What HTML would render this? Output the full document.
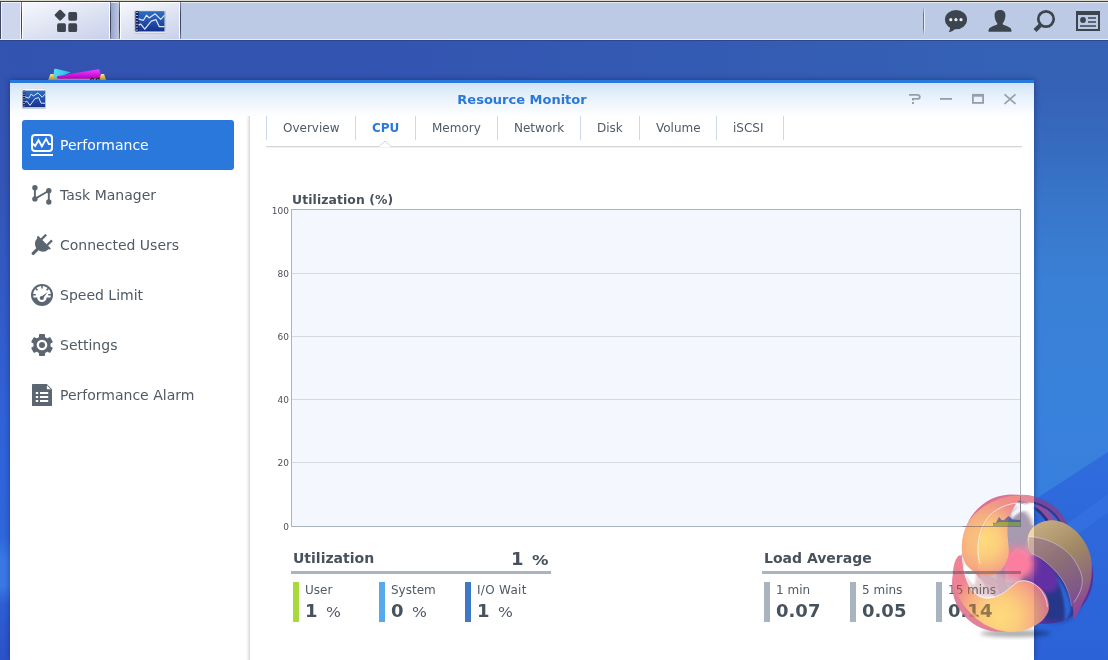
<!DOCTYPE html>
<html lang="en">
<head>
<meta charset="utf-8">
<title>Resource Monitor</title>
<style>
*{box-sizing:border-box;margin:0;padding:0}
html,body{width:1108px;height:660px;overflow:hidden}
body{position:relative;font-family:"DejaVu Sans","Liberation Sans",sans-serif;color:#505a64;
 background:#3356b2;}
.abs{position:absolute}
#desk{left:0;top:0;width:1108px;height:660px;
 background:
  linear-gradient(180deg,rgba(52,84,176,0) 0px,rgba(52,84,176,0) 660px),
  linear-gradient(90deg,#3353b0 0px,#3355b1 400px,#3563b6 1108px);}
#deskL{left:0;top:41px;width:10px;height:619px;background:linear-gradient(180deg,#3353b0 0%,#3455b6 22%,#335bc6 42%,#3062d8 61%,#2f66dc 80%,#3a78e4 84%,#3a78e4 88%,#2e5ed4 91%,#2c52c8 100%)}
#deskR{left:1034px;top:41px;width:74px;height:619px;background:linear-gradient(180deg,#3561b5 0px,#3562b6 50px,#366cc0 110px,#3876c9 160px,#3980d6 240px,#3982da 330px,#3880dc 420px,#367cdc 619px)}
/* taskbar */
#tb{left:0;top:0;width:1108px;height:41px;background:#bccae6}
#tb .l0{left:0;top:0;width:1108px;height:1px;background:#d9d9d0}
#tb .l1{left:0;top:1px;width:1108px;height:1px;background:#2a4184}
#tb .l2{left:0;top:2px;width:1108px;height:1px;background:#e4eaf6}
#tb .l3{left:0;top:39px;width:1108px;height:1px;background:#e6ecf8}
#tb .l4{left:0;top:40px;width:1108px;height:1px;background:#2c4690}
/* window */
#win{will-change:transform;left:10px;top:80px;width:1024px;height:580px;background:#fff;box-shadow:0 0 6px rgba(10,20,70,.45)}
#wtop{left:0;top:0;width:1024px;height:3px;background:#2a7ade}
#whead{left:0;top:3px;width:1024px;height:34px;background:linear-gradient(180deg,#d2e4f7 0%,#e2eefa 30%,#f0f6fd 62%,#fafcff 88%,#fff 100%)}
#title{left:0;top:12px;width:1024px;text-align:center;font-weight:bold;font-size:13px;line-height:16px;color:#2a78d8}
.nav{left:12px;width:212px;height:50px;border-radius:3px;font-size:14px;line-height:50px;padding-left:38px;color:#505a64;white-space:nowrap}
.nav.sel{background:#2a78dc;color:#fff}
.tab{top:38px;height:20px;font-size:12px;line-height:20px;white-space:nowrap;color:#505a64}
.tsep{top:36px;width:1px;height:24px;background:#cfd8ea}
.ylab{font-family:"DejaVu Sans","Liberation Sans",sans-serif;font-size:9px;line-height:10px;width:20px;text-align:right;color:#4c5058;left:259px}
.grid{left:282px;width:728px;height:1px;background:#d6d8dc}
.h14{font-weight:bold;font-size:14px;line-height:18px;color:#48525c;white-space:nowrap}
.rule{height:3px;background:#a9b4c0}
.bar{top:502px;width:6px;height:40px}
.lab{top:503px;font-size:12px;line-height:14px;color:#505a64;white-space:nowrap}
.val{top:520px;font-size:18px;line-height:22px;font-weight:bold;color:#48525c;white-space:nowrap}
.pct{display:inline-block;font-size:13.500px;font-weight:normal;color:#505a64;margin-left:8px;transform:scaleX(1.16);transform-origin:0 50%}
.vdark{top:2px;width:1px;height:38px;background:linear-gradient(180deg,#7882a4 0%,#3c4660 30%,#3c4660 70%,#7882a4 100%)}
.tbtn{top:2px;height:38px;border:1px solid #fff;background:linear-gradient(160deg,#f6f8fd 0%,#e6eaf6 35%,#d6dcf0 70%,#c8d0ea 100%)}
</style>
</head>
<body>
<div id="desk" class="abs"></div>
<div id="deskL" class="abs"></div>
<div id="deskR" class="abs"></div>

<svg class="abs" style="left:1034px;top:440px" width="74" height="220" viewBox="1034 440 74 220">
 <defs><linearGradient id="dr1" x1="0" y1="0" x2="0" y2="1"><stop offset="0" stop-color="#2f6cdc"/><stop offset="1" stop-color="#2b62d8"/></linearGradient></defs>
 <path d="M1034 500L1108 452V660H1034Z" fill="url(#dr1)"/>
 <path d="M1034 548L1108 494V512L1034 566Z" fill="#3a78e2" opacity=".45"/>
</svg>
<!-- desktop icon peeking above the window -->
<svg class="abs" style="left:44px;top:64px" width="66" height="18" viewBox="44 64 66 18">
 <defs>
  <linearGradient id="dg1" x1="0" y1="0" x2="0" y2="1"><stop offset="0" stop-color="#fbe88a"/><stop offset="1" stop-color="#e2a41c"/></linearGradient>
  <linearGradient id="dg2" x1="0" y1="0" x2="1" y2="0"><stop offset="0" stop-color="#58e0f8"/><stop offset="1" stop-color="#28b4e4"/></linearGradient>
  <linearGradient id="dg3" x1="0" y1="0" x2="0" y2="1"><stop offset="0" stop-color="#f040fc"/><stop offset="1" stop-color="#c000d8"/></linearGradient>
 </defs>
 <path d="M48 80.500l2.400-6.500h3.200l.4 1.500h46.500l.4-1.500h3.200l2.100 6.500z" fill="url(#dg1)"/>
 <path d="M54.200 69.300q.5-.8 1.600-.6l15 3.500l-14.300 6.300l-3.300-.6z" fill="url(#dg2)"/>
 <path d="M57 76.300l41-7.100q1.200-.2 1.600 .9l1 3.400l-.6 5.300h-42.600z" fill="url(#dg3)"/>
 <path d="M90.500 80q1.500-3 3.400-.5M96 80q1.600-3 3.600-.5" stroke="#3a2808" stroke-width="1.300" fill="none"/>
</svg>
<!-- taskbar -->
<div id="tb" class="abs">
 <div class="abs l0"></div><div class="abs l1"></div><div class="abs l2"></div>
 <!-- left stub -->
 <div class="abs" style="left:0;top:2px;width:1px;height:38px;background:#3e4864"></div>
 <div class="abs" style="left:1px;top:2px;width:20px;height:38px;background:#cdd6ec;border:1px solid #eef2fb"></div>
 <div class="abs vdark" style="left:21px"></div>
 <!-- main menu button -->
 <div class="abs tbtn" style="left:22px;width:88px"></div>
 <div class="abs vdark" style="left:110px"></div>
 <div class="abs" style="left:111px;top:3px;width:8px;height:36px;background:linear-gradient(90deg,#98a4c6 0%,#aab6d8 45%,#bcc8e6 100%)"></div>
 <div class="abs vdark" style="left:119px"></div>
 <!-- app button -->
 <div class="abs tbtn" style="left:120px;width:60px"></div>
 <div class="abs vdark" style="left:180px"></div>
 <!-- right divider -->
 <div class="abs" style="left:923px;top:7px;width:1px;height:28px;background:linear-gradient(180deg,rgba(80,88,110,0),#6c7490 25%,#6c7490 75%,rgba(80,88,110,0))"></div>
 <div class="abs" style="left:924px;top:7px;width:1px;height:28px;background:linear-gradient(180deg,rgba(255,255,255,0),#e8eefa 25%,#e8eefa 75%,rgba(255,255,255,0))"></div>

 <!-- main menu icon -->
 <svg class="abs" style="left:50px;top:6px" width="32" height="30" viewBox="50 6 32 30">
  <g fill="#3c444e">
   <rect x="55.9" y="11" width="8.4" height="8.4" rx="1.2" transform="rotate(45 60.1 15.2)"/>
   <rect x="68.3" y="12.1" width="8.8" height="8.6" rx="1.6"/>
   <rect x="57.1" y="23.3" width="8.8" height="8.7" rx="1.6"/>
   <rect x="68.3" y="23.3" width="8.8" height="8.7" rx="1.6"/>
  </g>
 </svg>
 <svg class="abs" style="left:134px;top:10px" width="32" height="24" viewBox="0 0 32 24">
  <defs><linearGradient id="mgA" x1="0" y1="0" x2="0" y2="1"><stop offset="0" stop-color="#2d6cc4"/><stop offset=".5" stop-color="#2252ac"/><stop offset="1" stop-color="#14308c"/></linearGradient></defs>
  <rect x="0" y="0" width="32" height="24" rx=".8" fill="#c4cad4"/>
  <rect x=".4" y=".5" width="31.2" height="0.9" fill="#fbfcfe"/>
  <rect x=".4" y="21.4" width="31.2" height="1.4" fill="#eef0f4"/>
  <rect x="1.6" y="1.2" width="28.8" height="20.2" fill="url(#mgA)"/>
  <rect x="1.6" y="1.2" width="2.9" height="20.2" fill="#0c1a5c"/>
  <path d="M1.9 2.6h2.0M1.9 5.5h2.0M1.9 8.4h2.0M1.9 11.3h2.0M1.9 14.2h2.0M1.9 17.1h2.0M1.9 20.0h2.0" stroke="#c8d4f0" stroke-width=".9"/>
  <polyline points="4.5,8.9 9.4,10.3 12.5,5.2 15.1,7.9 21.2,3.8 26.7,9.3 30.4,5.4" fill="none" stroke="#dfe8f8" stroke-width="1.2" stroke-linejoin="round"/>
  <polyline points="4.5,15.1 6.8,14.1 10.8,19.2 17.2,11.1 22.0,9.7 25.2,16.6 30.4,16.6" fill="none" stroke="#dfe8f8" stroke-width="1.2" stroke-linejoin="round"/>
</svg>
 <!-- chat -->
 <svg class="abs" style="left:940px;top:6px" width="32" height="30" viewBox="940 6 32 30">
  <ellipse cx="956" cy="19.600" rx="11" ry="9.600" fill="#3c444e"/>
  <path d="M950 27c.2 2-.3 3.700-1.300 5.100c2.800-.3 5.200-1.700 6.800-3.600z" fill="#3c444e"/>
  <circle cx="950.800" cy="19.700" r="1.600" fill="#e8eefa"/><circle cx="955.900" cy="19.700" r="1.600" fill="#e8eefa"/><circle cx="961" cy="19.700" r="1.600" fill="#e8eefa"/>
 </svg>
 <!-- user -->
 <svg class="abs" style="left:984px;top:6px" width="32" height="30" viewBox="984 6 32 30">
  <path d="M1000 9.900c3 0 5.400 1.700 5.400 5.100c0 1.200-.1 2.600-.5 3.900c-.5 1.800-1.200 3-2 4.100c-.4.600-.3 1.500.4 1.800c2.600 1.200 5.700 2 7.100 3.300c.9.800 1.100 2.300 1.100 3.700h-23c0-1.400.2-2.900 1.100-3.700c1.400-1.300 4.500-2.100 7.100-3.300c.7-.3.800-1.200.4-1.800c-.8-1.100-1.500-2.300-2-4.100c-.4-1.300-.5-2.700-.5-3.900c0-3.400 2.400-5.100 5.400-5.100z" fill="#3c444e"/>
 </svg>
 <!-- search -->
 <svg class="abs" style="left:1028px;top:6px" width="32" height="30" viewBox="1028 6 32 30">
  <circle cx="1046" cy="19" r="7.7" fill="none" stroke="#3c444e" stroke-width="2.700"/>
  <path d="M1040.300 25.300L1035 30.600" stroke="#3c444e" stroke-width="4.200" stroke-linecap="butt"/>
 </svg>
 <!-- widget -->
 <svg class="abs" style="left:1072px;top:6px" width="32" height="30" viewBox="1072 6 32 30">
  <rect x="1077" y="12" width="22" height="18" fill="none" stroke="#3c444e" stroke-width="2"/>
  <rect x="1076" y="11" width="24" height="4" fill="#3c444e"/>
  <circle cx="1083" cy="20" r="2.900" fill="#3c444e"/>
  <path d="M1088 18h8M1088 22h8M1080 26h16" stroke="#3c444e" stroke-width="1.700"/>
 </svg>
 <div class="abs l3"></div><div class="abs l4"></div>
</div>

<!-- window -->
<div id="win" class="abs">
 <div id="whead" class="abs"></div>
 <div id="wtop" class="abs"></div>
 <div id="title" class="abs">Resource Monitor</div>


 <!-- title icon -->
 <svg class="abs" style="left:12px;top:8px" width="24" height="21" viewBox="0 0 24 21">
  <defs><linearGradient id="mgB" x1="0" y1="0" x2="0" y2="1"><stop offset="0" stop-color="#2d6cc4"/><stop offset=".5" stop-color="#2252ac"/><stop offset="1" stop-color="#14308c"/></linearGradient></defs>
  <rect x="0" y="0" width="24" height="21" rx=".8" fill="#c4cad4"/>
  <rect x=".4" y=".5" width="23.2" height="2.3" fill="#fbfcfe"/>
  <rect x=".4" y="19.2" width="23.2" height="1.0" fill="#eef0f4"/>
  <rect x="0.9" y="2.6" width="22.2" height="16.599999999999998" fill="url(#mgB)"/>
  <rect x="0.9" y="2.6" width="2.2" height="16.599999999999998" fill="#0c1a5c"/>
  <path d="M1.2 3.8h1.6M1.2 6.2h1.6M1.2 8.5h1.6M1.2 10.9h1.6M1.2 13.3h1.6M1.2 15.6h1.6M1.2 18.0h1.6" stroke="#c8d4f0" stroke-width=".9"/>
  <polyline points="3.1,8.9 6.9,10.1 9.3,5.9 11.3,8.1 16.0,4.8 20.2,9.2 23.1,6.1" fill="none" stroke="#dfe8f8" stroke-width="1.0" stroke-linejoin="round"/>
  <polyline points="3.1,14.1 4.9,13.2 8.0,17.4 12.9,10.7 16.7,9.6 19.1,15.2 23.1,15.2" fill="none" stroke="#dfe8f8" stroke-width="1.0" stroke-linejoin="round"/>
</svg>
 <!-- window controls -->
 <svg class="abs" style="left:895px;top:10px" width="120" height="18" viewBox="905 90 120 18">
  <g fill="none" stroke="#969eaa" stroke-width="1.800">
   <path d="M909 94.900H917Q919.800 94.900 919.800 96.900T917 98.900H912.900V100.600"/>
   <path d="M912 103h1.900"/>
   <path d="M940 98.900h12"/>
   <rect x="972.900" y="95" width="10.200" height="7.900" />
   <path d="M972 95.300h12" stroke-width="2.800"/>
   <path d="M1004.500 94.300l11 9.500M1015.500 94.300l-11 9.500" stroke-width="1.700"/>
  </g>
 </svg>
 <!-- sidebar -->
 <div class="abs nav sel" style="top:40px">Performance</div>
 <div class="abs nav" style="top:90px">Task Manager</div>
 <div class="abs nav" style="top:140px">Connected Users</div>
 <div class="abs nav" style="top:190px">Speed Limit</div>
 <div class="abs nav" style="top:240px">Settings</div>
 <div class="abs nav" style="top:290px">Performance Alarm</div>
 <div class="abs" style="left:236px;top:36px;width:4px;height:544px;background:linear-gradient(90deg,#fff,#f4f4f4 40%,#d9d9d9)"></div>

 <!-- sidebar icons -->
 <svg class="abs" style="left:16px;top:45px" width="34" height="300" viewBox="26 125 34 300">
  <!-- performance -->
  <g fill="none" stroke="#fff" stroke-width="2">
   <rect x="32" y="135" width="20" height="16" rx="3"/>
   <path d="M31 155h22"/>
   <polyline points="32.500,143.500 35.200,146 38.500,140.200 41.900,146.300 46.100,138.900 48.800,144.200 51.500,144.200" stroke-width="1.800" stroke-linejoin="miter"/>
  </g>
  <!-- task manager -->
  <g fill="#5c6672" stroke="#5c6672">
   <path d="M34.900 187.700V198.900L48.800 190.800V202" fill="none" stroke-width="1.900"/>
   <circle cx="34.900" cy="187.700" r="2.700" stroke="none"/><circle cx="34.900" cy="198.900" r="2.700" stroke="none"/>
   <circle cx="48.800" cy="190.800" r="2.700" stroke="none"/><circle cx="48.800" cy="202" r="2.700" stroke="none"/>
  </g>
  <!-- plug -->
  <g fill="#5c6672" transform="translate(43.800 242.800) rotate(45)">
   <rect x="-9" y="-1" width="18" height="2"/>
   <path d="M-7.800 0h15.600v1.500a7.800 7.800 0 0 1-15.600 0z"/>
   <rect x="-5.200" y="-7.500" width="2.200" height="7"/>
   <rect x="3" y="-7.500" width="2.200" height="7"/>
   <rect x="-1.600" y="8" width="3.200" height="8.500" rx="1.200"/>
  </g>
  <!-- speed -->
  <g>
   <circle cx="42" cy="295" r="11" fill="#5c6672"/>
   <path d="M33.430 297.400A8.900 8.900 0 1 1 50.570 297.400H46.600A4.700 4.700 0 0 1 37.200 297.400Z" fill="#fff"/>
   <path d="M33 294.800h2.800M51 294.800h-2.800M42 286v2.600M35.600 288.400l1.900 1.900M48.400 288.400l-1.900 1.900" stroke="#5c6672" stroke-width="1.500"/>
   <circle cx="41.800" cy="298" r="2.100" fill="#5c6672"/>
   <path d="M41 296.700l6.600-4.400l-4.800 6.200z" fill="#5c6672"/>
  </g>
  <!-- gear -->
  <g fill="#5c6672">
   <circle cx="42" cy="345" r="8.600"/>
   <g id="tooth"><rect x="39" y="334" width="6" height="5" rx=".8"/><rect x="39" y="351" width="6" height="5" rx=".8"/></g>
   <g transform="rotate(60 42 345)"><rect x="39" y="334" width="6" height="5" rx=".8"/><rect x="39" y="351" width="6" height="5" rx=".8"/></g>
   <g transform="rotate(120 42 345)"><rect x="39" y="334" width="6" height="5" rx=".8"/><rect x="39" y="351" width="6" height="5" rx=".8"/></g>
   <circle cx="42" cy="345" r="5.300" fill="#fff"/>
   <circle cx="42" cy="345" r="3"/>
  </g>
  <!-- doc -->
  <g>
   <path d="M32.500 384h14.300l5.200 5.300v16.200a.5.500 0 0 1-.5.500h-19a.5.500 0 0 1-.5-.5v-21a.5.500 0 0 1 .5-.5z" fill="#5c6672"/>
   <path d="M46.900 385.300v3.900h3.900z" fill="#fff"/>
   <path d="M35.800 393h2.400M35.800 397h2.400M35.800 401h2.400M40 393h8.200M40 397h8.200M40 401h8.200" stroke="#fff" stroke-width="2"/>
  </g>
 </svg>
 <!-- tabs -->
 <div class="abs tsep" style="left:256px"></div>
 <div class="abs tsep" style="left:345px"></div>
 <div class="abs tsep" style="left:405px"></div>
 <div class="abs tsep" style="left:487px"></div>
 <div class="abs tsep" style="left:570px"></div>
 <div class="abs tsep" style="left:629px"></div>
 <div class="abs tsep" style="left:706px"></div>
 <div class="abs tsep" style="left:773px"></div>
 <div class="abs tab" style="left:273px">Overview</div>
 <div class="abs tab" style="left:362px;font-weight:bold;color:#2a78d8">CPU</div>
 <div class="abs tab" style="left:422px">Memory</div>
 <div class="abs tab" style="left:504px">Network</div>
 <div class="abs tab" style="left:587px">Disk</div>
 <div class="abs tab" style="left:646px">Volume</div>
 <div class="abs tab" style="left:723px">iSCSI</div>
 <div class="abs" style="left:256px;top:66px;width:756px;height:1px;background:#d4d6da"></div>
 <div class="abs" style="left:256px;top:67px;width:756px;height:1px;background:#f0f1f3"></div>

 <svg class="abs" style="left:366px;top:58px" width="18" height="10" viewBox="376 138 18 10"><path d="M379 147L385 141L391 147Z" fill="#fff"/><path d="M379 146.500L385 141L391 146.500" fill="none" stroke="#d0d3d8" stroke-width="1"/></svg>
 <!-- chart -->
 <div class="abs h14" style="left:282px;top:111px;font-size:12.400px;letter-spacing:.100px">Utilization (%)</div>
 <div class="abs" style="left:281px;top:129px;width:730px;height:318px;border:1px solid #a9b4c0;background:#f4f8fe"></div>
 <svg class="abs" style="left:980px;top:430px" width="32" height="18" viewBox="990 510 32 18">
  <path d="M993 526V522.600L995.500 523.600L997 521L999 517L1001.500 520L1004 520.300L1008.500 516L1012 519.600L1020.500 520V526Z" fill="#3060b4"/>
  <path d="M993 526V523.200L995.500 524L998 522H1020.500V526Z" fill="#8cc63c"/>
 </svg>
 <div class="abs grid" style="top:193px"></div>
 <div class="abs grid" style="top:256px"></div>
 <div class="abs grid" style="top:319px"></div>
 <div class="abs grid" style="top:382px"></div>
 <div class="abs ylab" style="top:126px">100</div>
 <div class="abs ylab" style="top:189px">80</div>
 <div class="abs ylab" style="top:252px">60</div>
 <div class="abs ylab" style="top:315px">40</div>
 <div class="abs ylab" style="top:378px">20</div>
 <div class="abs ylab" style="top:442px">0</div>

 <!-- utilization -->
 <div class="abs h14" style="left:283px;top:469px">Utilization</div>
 <div class="abs val" style="left:501px;top:468px">1<span class="pct" style="font-weight:bold;color:#48525c;transform:scaleX(1.22)">%</span></div>
 <div class="abs rule" style="left:281px;top:491px;width:260px"></div>
 <div class="abs bar" style="left:283px;background:#a8d93c"></div>
 <div class="abs lab" style="left:295px">User</div>
 <div class="abs val" style="left:295px">1<span class="pct">%</span></div>
 <div class="abs bar" style="left:369px;background:#58a8ec"></div>
 <div class="abs lab" style="left:381px">System</div>
 <div class="abs val" style="left:381px">0<span class="pct">%</span></div>
 <div class="abs bar" style="left:455px;background:#3f78c6"></div>
 <div class="abs lab" style="left:467px;letter-spacing:.300px">I/O Wait</div>
 <div class="abs val" style="left:467px">1<span class="pct">%</span></div>

 <!-- load average -->
 <div class="abs h14" style="left:754px;top:469px">Load Average</div>
 <div class="abs rule" style="left:752px;top:491px;width:259px"></div>
 <div class="abs bar" style="left:754px;background:#a9b4c0"></div>
 <div class="abs lab" style="left:766px">1 min</div>
 <div class="abs val" style="left:766px">0.07</div>
 <div class="abs bar" style="left:840px;background:#a9b4c0"></div>
 <div class="abs lab" style="left:852px">5 mins</div>
 <div class="abs val" style="left:852px">0.05</div>
 <div class="abs bar" style="left:926px;background:#a9b4c0"></div>
 <div class="abs lab" style="left:938px">15 mins</div>
 <div class="abs val" style="left:938px">0.14</div>
</div>


<!-- watermark logo -->
<svg id="logo" class="abs" style="left:945px;top:485px;opacity:.88" width="155" height="155" viewBox="0 0 660 660">
 <defs>
  <filter id="bl" x="-30%" y="-30%" width="160%" height="160%"><feGaussianBlur stdDeviation="9"/></filter>
  <filter id="bl2" x="-30%" y="-30%" width="160%" height="160%"><feGaussianBlur stdDeviation="18"/></filter>
  <filter id="bl3" x="-30%" y="-30%" width="160%" height="160%"><feGaussianBlur stdDeviation="4"/></filter>
  <radialGradient id="bodyA" cx="165" cy="235" r="185" gradientUnits="userSpaceOnUse">
   <stop offset="0" stop-color="#ffd66a"/><stop offset=".35" stop-color="#fcc86a"/><stop offset=".65" stop-color="#f6a672"/><stop offset="1" stop-color="#ee7a80"/></radialGradient>
  <radialGradient id="bodyC" cx="235" cy="560" r="215" gradientUnits="userSpaceOnUse">
   <stop offset="0" stop-color="#ffd66a"/><stop offset=".35" stop-color="#fcc86a"/><stop offset=".7" stop-color="#f6a272"/><stop offset="1" stop-color="#ec7484"/></radialGradient>
  <linearGradient id="bodyB" x1="380" y1="170" x2="600" y2="500" gradientUnits="userSpaceOnUse">
   <stop offset="0" stop-color="#dcb674"/><stop offset=".45" stop-color="#b08e54"/><stop offset=".8" stop-color="#9c6870"/><stop offset="1" stop-color="#9a448c"/></linearGradient>
  <clipPath id="cw"><rect x="0" y="0" width="379" height="660"/></clipPath>
  <clipPath id="cb"><rect x="379" y="0" width="300" height="660"/></clipPath>
  <mask id="holes" maskUnits="userSpaceOnUse" x="0" y="0" width="660" height="660">
   <rect x="0" y="0" width="660" height="660" fill="#fff"/>
   <g fill="#000" filter="url(#bl3)">
    <path d="M74 292C74 350 92 405 122 428C142 405 128 350 98 318Z"/>
    <path d="M470 385C505 420 530 470 537 525C535 548 525 566 508 582C514 530 505 450 470 385Z"/>
    <path d="M280 122C308 90 345 73 384 70C388 82 388 94 382 104C345 102 310 114 284 146Z"/>
   </g>
  </mask>
 </defs>
 <ellipse cx="300" cy="632" rx="150" ry="15" fill="#000" opacity=".38" filter="url(#bl)"/>
 <g mask="url(#holes)">
 <!-- rings -->
 <g clip-path="url(#cw)"><circle cx="285" cy="245" r="190" fill="none" stroke="#d86088" stroke-width="30"/>
 <circle cx="285" cy="245" r="176" fill="none" stroke="#5a3880" stroke-width="10" opacity=".8"/></g>
 <g clip-path="url(#cb)"><circle cx="285" cy="245" r="190" fill="none" stroke="#9a4c98" stroke-width="30"/>
 <circle cx="285" cy="245" r="176" fill="none" stroke="#2c2c78" stroke-width="12"/></g>
 <circle cx="425" cy="385" r="190" fill="none" stroke="#5a2c98" stroke-width="32"/>
 <circle cx="425" cy="385" r="175" fill="none" stroke="#27307c" stroke-width="12"/>
 <circle cx="235" cy="420" r="190" fill="none" stroke="#e0708c" stroke-width="30"/>
 <circle cx="235" cy="420" r="176" fill="none" stroke="#8c5890" stroke-width="10" opacity=".8"/>
 <!-- core -->
 <g>
  <circle cx="320" cy="338" r="176" fill="#b89cb0" fill-opacity=".8"/>
  <ellipse cx="450" cy="440" rx="120" ry="150" fill="#26307e" filter="url(#bl)" transform="rotate(-30 450 440)"/>
  <ellipse cx="410" cy="380" rx="60" ry="90" fill="#6a2c9c" filter="url(#bl)" transform="rotate(-40 410 380)"/>
  <ellipse cx="305" cy="190" rx="70" ry="90" fill="#9c8ca4" filter="url(#bl)"/>
  <ellipse cx="175" cy="425" rx="120" ry="55" fill="#d4b0b8" fill-opacity=".7" filter="url(#bl)"/>
  <circle cx="310" cy="335" r="70" fill="#fb6c92" filter="url(#bl2)"/>
  <circle cx="310" cy="335" r="48" fill="#fb6c92" filter="url(#bl)"/>
 </g>
 </g>
 <g clip-path="url(#cb)"><path d="M332 56C360 56 400 66 445 94C480 118 505 152 516 195" fill="none" stroke="#7a4496" stroke-width="28"/>
 <path d="M336 69C370 70 405 80 440 103C470 124 492 154 502 192" fill="none" stroke="#2c2c78" stroke-width="9" opacity=".8"/></g>
 <g clip-path="url(#cw)"><path d="M318 56C345 55 365 58 385 64" fill="none" stroke="#e27a8a" stroke-width="28"/></g>
 <!-- body B (right) -->
 <path d="M352 235C350 190 395 150 457 150C540 152 620 245 625 335C628 400 615 450 593 489C580 520 565 550 548 574C546 540 545 520 539 505C530 450 500 390 440 337C410 312 385 300 367 290C358 280 353 262 352 235Z" fill="url(#bodyB)"/>
 <path d="M352 235C350 190 395 150 457 150C540 152 620 245 625 335C628 400 615 450 593 489C580 520 565 550 548 574C546 540 545 520 539 505C530 450 500 390 440 337C410 312 385 300 367 290C358 280 353 262 352 235Z" fill="#fff0c8" opacity=".55" clip-path="url(#cw)"/>
 <path d="M358 220C400 222 430 232 458 245C500 265 530 290 548 317C570 350 584 380 584 407C584 440 570 470 548 500" fill="none" stroke="#e8ecf8" stroke-width="3.200" opacity=".8"/>
 <path d="M358 222C400 222 430 232 458 245C500 265 530 290 548 317C570 350 584 380 584 407C584 440 570 470 548 498L548 574C546 540 545 520 539 505C530 450 500 390 440 337C410 312 385 300 367 290C358 280 353 262 358 222Z" fill="#6c3498" opacity=".30"/>
 <path d="M367 290C400 305 420 318 440 337C500 390 528 440 539 516" fill="none" stroke="#f0d8e8" stroke-width="2.500" opacity=".7"/>
 <!-- body C (bottom) -->
 <path d="M58 300C30 330 25 400 50 460C95 565 200 630 290 625C370 620 430 580 442 530C446 480 420 440 380 420C350 405 320 400 295 420C250 465 205 492 155 480C105 462 78 400 72 300Z" fill="url(#bodyC)"/>
 <path d="M74 305C80 400 112 462 165 480C230 490 270 440 310 412C360 392 430 440 436 520" fill="none" stroke="#fff" stroke-width="3.500" opacity=".85"/>
 <!-- body A (top-left) -->
 <path d="M332 48C260 35 160 75 105 150C65 210 60 300 95 345C130 385 180 395 215 380C250 360 272 320 272 280C270 230 258 190 275 135C285 100 310 70 332 48Z" fill="url(#bodyA)"/>
 <path d="M332 48C260 35 160 75 105 150C65 210 60 300 95 345C110 362 128 372 150 380C128 320 130 220 190 140C230 95 290 72 332 48Z" fill="#f08c70" opacity=".35"/>
 <path d="M150 335C130 270 140 190 190 130C230 90 290 70 345 78" fill="none" stroke="#fff" stroke-width="3.500" opacity=".85"/>
</svg>

<!-- text showing through the watermark -->
<div class="abs" style="left:10px;top:80px;width:1024px;height:580px;opacity:.5;will-change:transform;clip-path:circle(69px at 1011px 483px)">
 <div class="abs lab" style="left:938px;color:#40362c">15 mins</div>
 <div class="abs val" style="left:938px;color:#40362c">0.14</div>
 <div class="abs rule" style="left:942px;top:491px;width:69px;background:#5c5468"></div>
 <div class="abs" style="left:940px;top:446px;width:71px;height:1px;background:#5c5468"></div>
 <div class="abs" style="left:1010px;top:416px;width:1px;height:31px;background:#5c5468"></div>
 <svg class="abs" style="left:980px;top:430px" width="32" height="18" viewBox="990 510 32 18">
  <path d="M993 526V522.600L995.500 523.600L997 521L999 517L1001.500 520L1004 520.300L1008.500 516L1012 519.600L1020.500 520V526Z" fill="#1c3c9c"/>
  <path d="M993 526V523.200L995.500 524L998 522H1020.500V526Z" fill="#5c9c1c"/>
 </svg>
</div>
</body>
</html>
